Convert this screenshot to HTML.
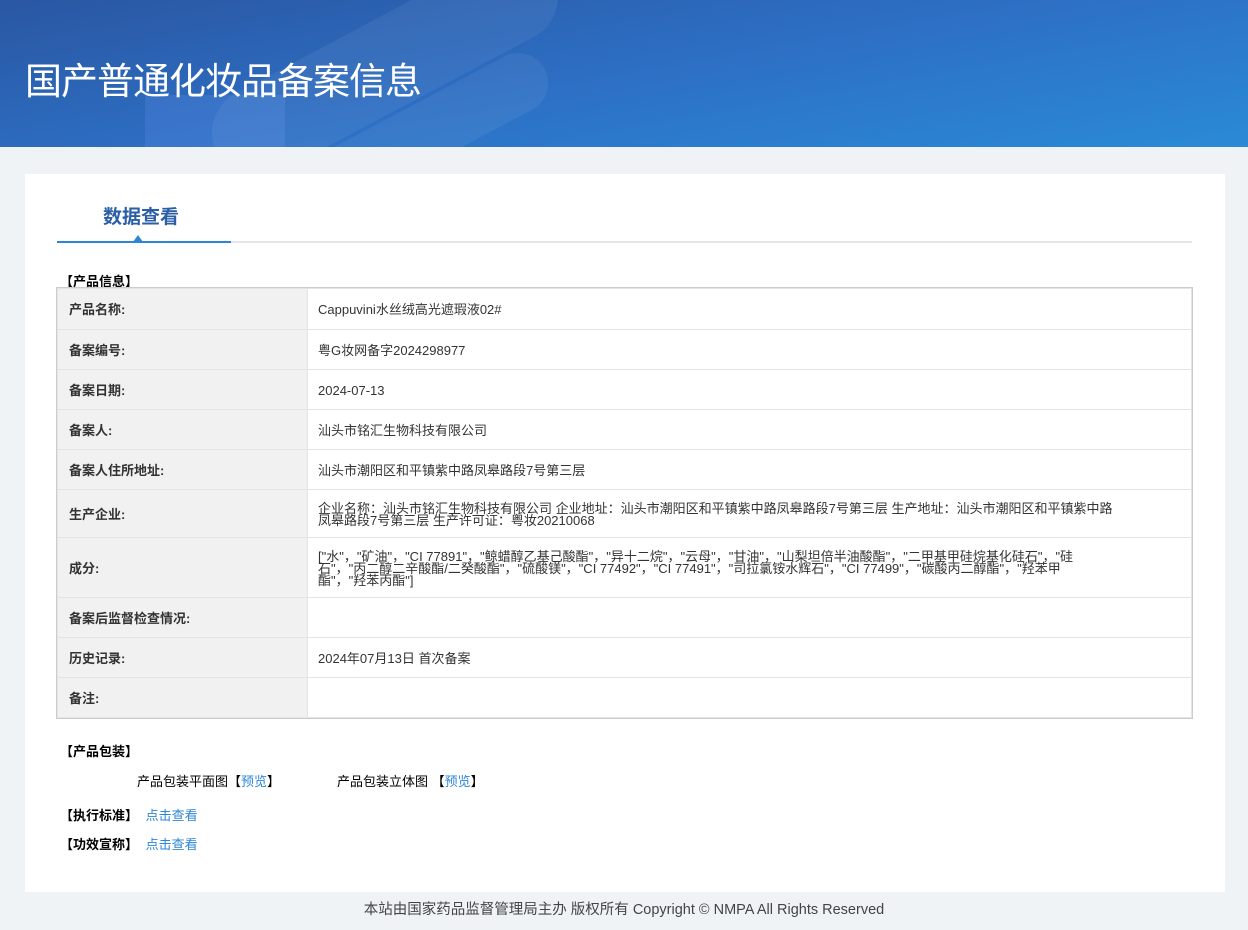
<!DOCTYPE html>
<html><head><meta charset="utf-8"><style>
*{margin:0;padding:0;box-sizing:border-box}
body{width:1248px;height:930px;background:#eff3f6;font-family:"Liberation Sans","Noto Sans CJK SC",sans-serif;font-size:13px;color:#333;position:relative;overflow:hidden}
.hdr{position:absolute;left:0;top:0;width:1248px;height:147px;background:linear-gradient(170deg,#2a57a3 0%,#2d6fc4 50%,#2a8ad6 100%);overflow:hidden}
.hdr h1{position:absolute;left:25px;top:51px;color:#fff;font-size:37px;font-weight:normal;letter-spacing:-1px;font-family:"Noto Sans CJK SC",sans-serif}
.blob{position:absolute;background:rgba(255,255,255,.06)}
.card{position:absolute;left:25px;top:174px;width:1200px;height:718px;background:#fff}
.tab{position:absolute;left:78px;top:28px;font-size:19px;font-weight:bold;color:#2a5ea6}
.line{position:absolute;left:32px;top:67px;width:1135px;height:2px;background:#e3e5e8}
.line i{position:absolute;left:0;top:0;width:174px;height:2px;background:#2c86d8}
.tri{position:absolute;left:108px;top:61px;width:0;height:0;border-left:5px solid transparent;border-right:5px solid transparent;border-bottom:7px solid #2c86d8}
.sec{position:absolute;font-size:13px;font-weight:bold;color:#000}
table{position:absolute;left:32px;top:114px;width:1135px;border-collapse:collapse;border:1px solid #9fbce4;outline:1px solid #ccc}
td{border:1px solid #e4e4e4;font-size:13px;padding:2px 10px 0;line-height:12px}
td.l{width:250px;background:#f1f1f1;font-weight:bold;color:#333;padding-left:11px}
a{color:#2c86d8;text-decoration:none}
.foot{position:absolute;left:0;top:898px;width:1248px;text-align:center;font-size:14.5px;color:#444}
</style></head><body>
<div class="hdr">
<div class="blob" style="left:145px;top:95px;width:140px;height:60px;background:rgba(90,140,230,.3)"></div>
<div class="blob" style="left:195px;top:20px;width:380px;height:90px;border-radius:45px;transform:rotate(-28deg)"></div>
<div class="blob" style="left:300px;top:100px;width:260px;height:60px;border-radius:30px;transform:rotate(-28deg)"></div>
<h1>国产普通化妆品备案信息</h1>
</div>
<div class="card">
<div class="tab">数据查看</div>
<div class="line"><i></i></div>
<div class="tri"></div>
<div class="sec" style="left:35px;top:97px">【产品信息】</div>
<table>
<tr style="height:41px"><td class="l">产品名称:</td><td>Cappuvini水丝绒高光遮瑕液02#</td></tr>
<tr style="height:40px"><td class="l">备案编号:</td><td>粤G妆网备字2024298977</td></tr>
<tr style="height:40px"><td class="l">备案日期:</td><td>2024-07-13</td></tr>
<tr style="height:40px"><td class="l">备案人:</td><td>汕头市铭汇生物科技有限公司</td></tr>
<tr style="height:40px"><td class="l">备案人住所地址:</td><td>汕头市潮阳区和平镇紫中路凤皋路段7号第三层</td></tr>
<tr style="height:48px"><td class="l">生产企业:</td><td style="padding-right:70px">企业名称：汕头市铭汇生物科技有限公司 企业地址：汕头市潮阳区和平镇紫中路凤皋路段7号第三层 生产地址：汕头市潮阳区和平镇紫中路 凤皋路段7号第三层 生产许可证：粤妆20210068</td></tr>
<tr style="height:60px"><td class="l">成分:</td><td style="padding-right:70px">["水"，"矿油"，"CI 77891"，"鲸蜡醇乙基己酸酯"，"异十二烷"，"云母"，"甘油"，"山梨坦倍半油酸酯"，"二甲基甲硅烷基化硅石"，"硅<br>石"，"丙二醇二辛酸酯/二癸酸酯"，"硫酸镁"，"CI 77492"，"CI 77491"，"司拉氯铵水辉石"，"CI 77499"，"碳酸丙二醇酯"，"羟苯甲<br>酯"，"羟苯丙酯"]</td></tr>
<tr style="height:40px"><td class="l">备案后监督检查情况:</td><td></td></tr>
<tr style="height:40px"><td class="l">历史记录:</td><td>2024年07月13日 首次备案</td></tr>
<tr style="height:40px"><td class="l">备注:</td><td></td></tr>
</table>
<div class="sec" style="left:35px;top:567px">【产品包装】</div>
<div style="position:absolute;left:112px;top:597px;color:#000">产品包装平面图【<a>预览</a>】</div>
<div style="position:absolute;left:312px;top:597px;color:#000">产品包装立体图 【<a>预览</a>】</div>
<div class="sec" style="left:35px;top:631px">【执行标准】 <a style="font-weight:normal;margin-left:4px">点击查看</a></div>
<div class="sec" style="left:35px;top:660px">【功效宣称】 <a style="font-weight:normal;margin-left:4px">点击查看</a></div>
</div>
<div class="foot">本站由国家药品监督管理局主办 版权所有 Copyright © NMPA All Rights Reserved</div>
</body></html>
